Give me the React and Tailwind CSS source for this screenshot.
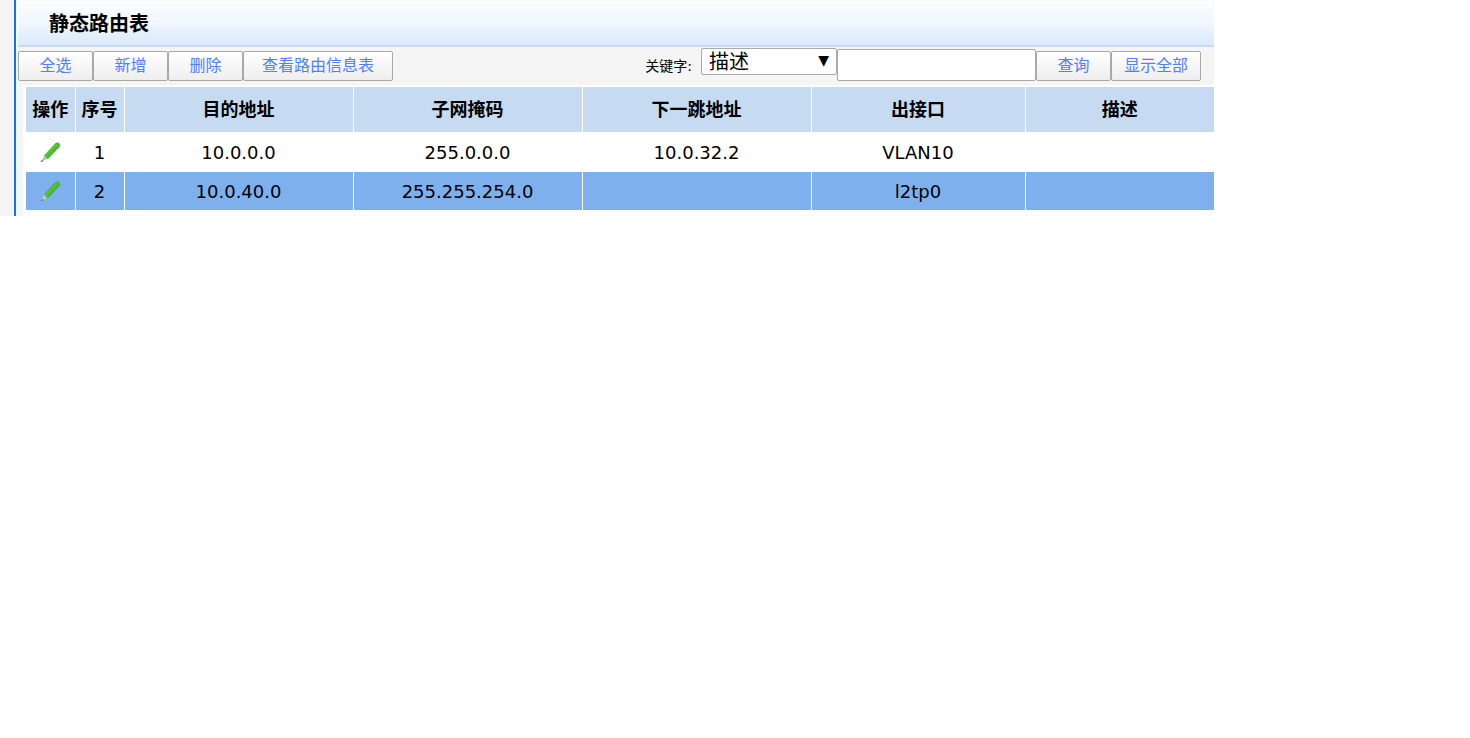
import React from 'react';

const cjk = "font-['Tahoma','DejaVu_Sans','Noto_Sans_CJK_SC',sans-serif]";

const leftButtons = [
  { label: '全选', w: 'w-[75px]' },
  { label: '新增', w: 'w-[75px]' },
  { label: '删除', w: 'w-[75px]' },
  { label: '查看路由信息表', w: 'w-[150px]' },
];

const columns = [
  { label: '操作', w: 'w-[49px]' },
  { label: '序号', w: 'w-[49px]' },
  { label: '目的地址', w: 'w-[229px]' },
  { label: '子网掩码', w: 'w-[229px]' },
  { label: '下一跳地址', w: 'w-[229px]' },
  { label: '出接口', w: 'w-[214px]' },
  { label: '描述', w: 'w-[189px]' },
];

const rows = [
  { id: 1, dest: '10.0.0.0', mask: '255.0.0.0', next: '10.0.32.2', port: 'VLAN10', desc: '', bg: 'bg-white', h: 'h-[40px]' },
  { id: 2, dest: '10.0.40.0', mask: '255.255.254.0', next: '', port: 'l2tp0', desc: '', bg: 'bg-[#7fb0ee]', h: 'h-[38px]' },
];

function ToolButton({ label, w }) {
  return (
    <button className={`${w} h-[30px] border border-[#a9a9a9] rounded-[2px] bg-gradient-to-b from-white to-[#eeeeee] text-[16px] text-[#4f80ff] leading-none`}>
      {label}
    </button>
  );
}

function Pencil() {
  return (
    <svg width="24" height="24" viewBox="0 0 24 24" className="block mx-auto">
      <defs>
        <linearGradient id="pencilBody" x1="0" y1="0" x2="1" y2="1">
          <stop offset="0" stopColor="#9be05a" />
          <stop offset="0.5" stopColor="#4fc226" />
          <stop offset="1" stopColor="#1c8a1c" />
        </linearGradient>
      </defs>
      <path d="M6.5 15.5 L17.5 3.5 Q19 2 21 3.5 Q22.5 5 21 7 L9.5 19 Z" fill="url(#pencilBody)" stroke="#2f8f2a" strokeWidth="0.6" />
      <path d="M6.5 15.5 L9.5 19 L2.5 22 Z" fill="#b9c9b0" />
      <path d="M4.2 20 L5.2 21.2 L2.5 22 Z" fill="#3d5a3d" />
    </svg>
  );
}

export default function App() {
  return (
    <div className={`w-[1214px] h-[216px] flex bg-white text-black ${cjk}`}>
      <div className="w-[14px] bg-[#f5f5f5]" />
      <div className="w-[2px] bg-[#0a78f5]" />
      <div className="flex-1 flex flex-col bg-[#fbfbfb]">
        <div className="h-[47px] ml-[2px] pt-[2px]">
          <div className="h-full flex items-center pl-[31px] bg-gradient-to-b from-[#fbfdff] via-[#eff6fe] to-[#dbe9fb] border-b-2 border-[#c5dbf2]">
            <h1 className="text-[20px] font-bold">静态路由表</h1>
          </div>
        </div>

        <div className="h-[38px] flex items-start justify-between bg-[#f5f5f5] pl-[2px] pr-[13px]">
          <div className="flex pt-[4px]">
            {leftButtons.map((b) => (
              <ToolButton key={b.label} {...b} />
            ))}
          </div>
          <div className="flex items-start">
            <span className="text-[14px] mt-[9px] mr-[9px] leading-[20px]">关键字:</span>
            <div className="relative mt-[1px]">
              <select className="appearance-none w-[136px] h-[27px] pl-[7px] border border-[#a9a9a9] rounded-[2px] bg-white text-[20px] leading-[27px] overflow-hidden">
                <option>描述</option>
              </select>
              <span className="absolute right-[8px] top-[2px] text-[14px] pointer-events-none">▼</span>
            </div>
            <input className="w-[199px] h-[32px] mt-[2px] border border-[#a9a9a9] rounded-[2px] bg-white" />
            <div className="flex pt-[4px]">
              <ToolButton label="查询" w="w-[75px]" />
              <ToolButton label="显示全部" w="w-[90px]" />
            </div>
          </div>
        </div>

        <div className="flex-1 pl-[7px] bg-[#f5f5f5]">
          <div className="h-full pl-[3px] pt-[2px] bg-white">
            <table className="table-fixed border-collapse w-[1188px] text-center">
              <thead>
                <tr className="h-[45px] bg-[#c6dbf1] text-[18px]">
                  {columns.map((c) => (
                    <th key={c.label} className={`${c.w} p-0 font-bold border-r border-white last:border-r-0`}>{c.label}</th>
                  ))}
                </tr>
              </thead>
              <tbody>
                {rows.map((r) => (
                  <tr key={r.id} className={`${r.h} ${r.bg} text-[18px]`}>
                    <td className="p-0 border-r border-white"><Pencil /></td>
                    <td className="p-0 border-r border-white">{r.id}</td>
                    <td className="p-0 border-r border-white">{r.dest}</td>
                    <td className="p-0 border-r border-white">{r.mask}</td>
                    <td className="p-0 border-r border-white">{r.next}</td>
                    <td className="p-0 border-r border-white">{r.port}</td>
                    <td className="p-0">{r.desc}</td>
                  </tr>
                ))}
              </tbody>
            </table>
          </div>
        </div>
      </div>
    </div>
  );
}
